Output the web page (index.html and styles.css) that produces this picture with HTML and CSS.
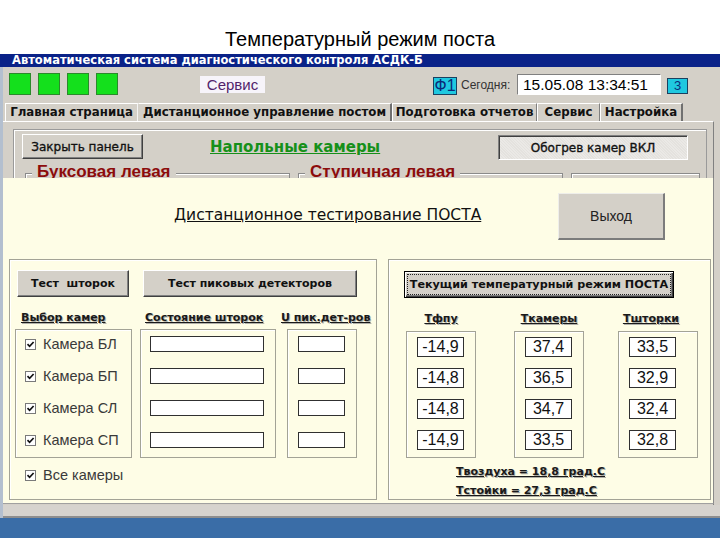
FILE: index.html
```html
<!DOCTYPE html>
<html lang="ru">
<head>
<meta charset="utf-8">
<title>Температурный режим поста</title>
<link rel="stylesheet" href="styles.css">
</head>
<body>
<div class="slide-title">Температурный режим поста</div>
<div class="titlebar">Автоматическая система диагностического контроля АСДК-Б</div>
<div class="window">
  <div class="toolbar">
    <div class="lamps"><span class="lamp"></span><span class="lamp"></span><span class="lamp"></span><span class="lamp"></span></div>
    <div class="service-label">Сервис</div>
    <div class="f1">Ф1</div>
    <div class="today">Сегодня:</div>
    <div class="datebox">15.05.08 13:34:51</div>
    <div class="z-btn">З</div>
  </div>
  <div class="tabs">
    <div class="tab t1">Главная страница</div>
    <div class="tab t2">Дистанционное управление постом</div>
    <div class="tab t3">Подготовка отчетов</div>
    <div class="tab t4">Сервис</div>
    <div class="tab t5">Настройка</div>
  </div>
  <div class="tabpanel">
    <div class="frame">
      <div class="frame-top">
        <div class="btn close-btn">Закрыть панель</div>
        <div class="floor-title">Напольные камеры</div>
        <div class="heat-btn">Обогрев камер ВКЛ</div>
      </div>
      <div class="groups">
        <div class="group g1"><span class="group-title">Буксовая левая</span></div>
        <div class="group g2"><span class="group-title">Ступичная левая</span></div>
        <div class="group g3"></div>
      </div>
    </div>
  </div>
  <div class="bottom-band"></div>

  <div class="dialog">
    <div class="dlg-head">
      <div class="dlg-title">Дистанционное тестирование ПОСТА</div>
      <div class="exit-btn">Выход</div>
    </div>
    <div class="dlg-body">
      <div class="gbox left-box">
        <div class="btn-row">
          <div class="btn test1">Тест&nbsp; шторок</div>
          <div class="btn test2">Тест пиковых детекторов</div>
        </div>
        <div class="heads">
          <span class="hd h-cam">Выбор камер</span>
          <span class="hd h-sh">Состояние шторок</span>
          <span class="hd h-u">U пик.дет-ров</span>
        </div>
        <div class="cols">
          <div class="col cams">
            <div class="cam-row"><svg class="cb" width="11" height="11" viewBox="0 0 11 11"><rect x="0.5" y="0.5" width="10" height="10" fill="#fff" stroke="#7a7a7a"/><path d="M2.5 5.2 L4.6 7.3 L8.6 3" stroke="#111" stroke-width="1.7" fill="none"/></svg><span>Камера БЛ</span></div>
            <div class="cam-row"><svg class="cb" width="11" height="11" viewBox="0 0 11 11"><rect x="0.5" y="0.5" width="10" height="10" fill="#fff" stroke="#7a7a7a"/><path d="M2.5 5.2 L4.6 7.3 L8.6 3" stroke="#111" stroke-width="1.7" fill="none"/></svg><span>Камера БП</span></div>
            <div class="cam-row"><svg class="cb" width="11" height="11" viewBox="0 0 11 11"><rect x="0.5" y="0.5" width="10" height="10" fill="#fff" stroke="#7a7a7a"/><path d="M2.5 5.2 L4.6 7.3 L8.6 3" stroke="#111" stroke-width="1.7" fill="none"/></svg><span>Камера СЛ</span></div>
            <div class="cam-row"><svg class="cb" width="11" height="11" viewBox="0 0 11 11"><rect x="0.5" y="0.5" width="10" height="10" fill="#fff" stroke="#7a7a7a"/><path d="M2.5 5.2 L4.6 7.3 L8.6 3" stroke="#111" stroke-width="1.7" fill="none"/></svg><span>Камера СП</span></div>
          </div>
          <div class="col shut">
            <div class="field wide"></div>
            <div class="field wide"></div>
            <div class="field wide"></div>
            <div class="field wide"></div>
          </div>
          <div class="col upk">
            <div class="field narrow"></div>
            <div class="field narrow"></div>
            <div class="field narrow"></div>
            <div class="field narrow"></div>
          </div>
        </div>
        <div class="cam-row all-cams"><svg class="cb" width="11" height="11" viewBox="0 0 11 11"><rect x="0.5" y="0.5" width="10" height="10" fill="#fff" stroke="#7a7a7a"/><path d="M2.5 5.2 L4.6 7.3 L8.6 3" stroke="#111" stroke-width="1.7" fill="none"/></svg><span>Все камеры</span></div>
      </div>

      <div class="gbox right-box">
        <div class="cur-btn"><span class="focus">Текущий температурный режим ПОСТА</span></div>
        <div class="tcols">
          <div class="tcol c1">
            <div class="hd th">Тфпу</div>
            <div class="tbox">
              <div class="val">-14,9</div>
              <div class="val">-14,8</div>
              <div class="val">-14,8</div>
              <div class="val">-14,9</div>
            </div>
          </div>
          <div class="tcol c2">
            <div class="hd th">Ткамеры</div>
            <div class="tbox">
              <div class="val">37,4</div>
              <div class="val">36,5</div>
              <div class="val">34,7</div>
              <div class="val">33,5</div>
            </div>
          </div>
          <div class="tcol c3">
            <div class="hd th th3">Тшторки</div>
            <div class="tbox">
              <div class="val">33,5</div>
              <div class="val">32,9</div>
              <div class="val">32,4</div>
              <div class="val">32,8</div>
            </div>
          </div>
        </div>
        <div class="hd summ s1">Твоздуха = 18,8 град.С</div>
        <div class="hd summ s2">Тстойки = 27,3 град.С</div>
      </div>
    </div>
  </div>
</div>
<div class="taskbar"></div>
</body>
</html>
```

FILE: styles.css
```css
* { box-sizing: border-box; }
html, body { margin: 0; padding: 0; }
body {
  width: 720px;
  height: 540px;
  overflow: hidden;
  background: #fff;
  font-family: "DejaVu Sans", sans-serif;
}

.slide-title {
  height: 54px;
  display: flex;
  align-items: flex-end;
  justify-content: center;
  padding-bottom: 4px;
  font-family: "Liberation Sans", Arial, sans-serif;
  font-size: 20px;
  line-height: 22px;
  color: #000;
}

.titlebar {
  height: 13px;
  background: #0a2288;
  color: #fff;
  font-weight: bold;
  font-size: 11.5px;
  line-height: 13px;
  padding-left: 12px;
  white-space: nowrap;
}

.window {
  position: relative;
  height: 451px;
  background: #d4d0c8;
  border-left: 3px solid #b3bfcf;
}

/* toolbar */
.toolbar {
  height: 34px;
  display: flex;
  align-items: center;
  padding-left: 6px;
}
.lamps { display: flex; gap: 7px; }
.lamp {
  width: 22px;
  height: 22px;
  background: #14e01c;
  border: 1px solid #2b8a2b;
}
.service-label {
  margin-left: 82px;
  width: 65px;
  height: 17px;
  background: #f7f4fa;
  color: #52236a;
  font-family: "Liberation Sans", Arial, sans-serif;
  font-size: 15px;
  line-height: 17px;
  text-align: center;
}
.f1 {
  margin-left: 168px;
  margin-top: 3px;
  width: 24px;
  height: 18px;
  background: #1fc8e0;
  border: 1px solid #1a4060;
  color: #0a2a78;
  font-family: "Liberation Sans", Arial, sans-serif;
  font-size: 16px;
  line-height: 16px;
  text-align: center;
}
.today {
  margin-left: 4px;
  width: 52px;
  font-family: "Liberation Sans", Arial, sans-serif;
  font-size: 12px;
  color: #333;
  white-space: nowrap;
  margin-top: 2px;
}
.datebox {
  margin-left: 4px;
  width: 144px;
  height: 21px;
  background: #fff;
  border-top: 1px solid #808080;
  border-left: 1px solid #808080;
  border-right: 1px solid #fff;
  border-bottom: 1px solid #fff;
  font-family: "Liberation Sans", Arial, sans-serif;
  font-size: 15.5px;
  line-height: 19px;
  padding-left: 5px;
  color: #000;
  white-space: nowrap;
}
.z-btn {
  margin-left: 6px;
  margin-top: 3px;
  width: 21px;
  height: 16px;
  background: #1fc8e0;
  border: 1px solid #1a4060;
  color: #0a2a78;
  font-family: "Liberation Sans", Arial, sans-serif;
  font-size: 12px;
  line-height: 14px;
  text-align: center;
}

/* tabs */
.tabs {
  height: 20px;
  display: flex;
  align-items: flex-end;
  padding-left: 2px;
}
.tab {
  flex: none;
  height: 18px;
  border-top: 1px solid #fff;
  border-left: 1px solid #fff;
  border-right: 1px solid #808080;
  font-weight: bold;
  font-size: 11.8px;
  line-height: 16px;
  color: #111;
  text-align: center;
  white-space: nowrap;
}
.t1 { width: 133px; border-right-color: #f4f4f4; }
.t2 { width: 254px; border-left-color: transparent; border-right: 2px solid #707070; }
.t3 { width: 145px; }
.t4 { width: 63px; }
.t5 { width: 83px; border-right: 2px solid #707070; }

.tabpanel {
  width: 711px;
  height: 384px;
  border-top: 1px solid #fff;
  border-right: 1px solid #808080;
  overflow: hidden;
}
.frame {
  margin-top: 7px;
  margin-left: 10px;
  width: 694px;
  height: 120px;
  border: 1px solid #9a9a9a;
  box-shadow: inset 1px 1px 0 #fff;
  padding: 4px 18px 0 8px;
}
.frame-top {
  display: flex;
  align-items: flex-start;
}
.btn {
  flex: none;
  background: #d4d0c8;
  border: 1px solid;
  border-color: #fff #404040 #404040 #fff;
  box-shadow: inset -1px -1px 0 #808080;
  font-weight: bold;
  font-size: 11px;
  color: #111;
  display: flex;
  align-items: center;
  justify-content: center;
  white-space: nowrap;
}
.close-btn { width: 121px; height: 25px; font-weight: normal; font-size: 12px; -webkit-text-stroke: 0.35px #111; }
.floor-title {
  margin-left: 67px;
  margin-top: 4px;
  font-weight: bold;
  font-size: 15px;
  line-height: 18px;
  color: #16901a;
  text-decoration: underline;
  white-space: nowrap;
}
.heat-btn {
  flex: none;
  margin-left: auto;
  margin-top: 1px;
  width: 190px;
  height: 25px;
  background-color: #e4e2de;
  background-image: repeating-linear-gradient(45deg, rgba(255,255,255,0.25) 0 1px, transparent 1px 2px);
  border: 1px solid;
  border-color: #808080 #fff #fff #808080;
  box-shadow: inset 1px 1px 0 #404040;
  font-size: 12px;
  font-weight: normal;
  -webkit-text-stroke: 0.35px #111;
  color: #111;
  display: flex;
  align-items: center;
  justify-content: center;
  white-space: nowrap;
}
.groups {
  display: flex;
  margin-top: 13px;
  margin-left: 3px;
}
.group {
  flex: none;
  height: 40px;
  border: 1px solid #8a8a8a;
  box-shadow: inset 1px 1px 0 #fff;
  display: flex;
  align-items: flex-start;
}
.g1 { width: 265px; }
.g2 { width: 265px; margin-left: 8px; }
.g3 { width: 129px; margin-left: 8px; }
.group-title {
  margin-top: -12px;
  margin-left: 6px;
  padding: 0 5px;
  background: #d4d0c8;
  font-family: "Liberation Sans", Arial, sans-serif;
  font-weight: bold;
  font-size: 17px;
  line-height: 20px;
  color: #8c0c0c;
  white-space: nowrap;
}

.bottom-band {
  height: 13px;
  background: #d6d3ce;
  border-bottom: 2px solid #8e8e8e;
}

/* dialog */
.dialog {
  position: absolute;
  top: 111px;
  left: 0;
  width: 711px;
  height: 326px;
  background: #fefde6;
  border-right: 1px solid #8a8a8a;
  border-bottom: 1px solid #a0a0a0;
}
.dlg-head {
  height: 81px;
  display: flex;
  align-items: flex-start;
}
.dlg-title {
  margin-left: 171px;
  margin-top: 27px;
  font-family: "DejaVu Sans", sans-serif;
  font-size: 15.5px;
  line-height: 20px;
  color: #111;
  text-decoration: underline;
  white-space: nowrap;
}
.exit-btn {
  margin-left: auto;
  margin-right: 48px;
  margin-top: 15px;
  width: 107px;
  height: 47px;
  background: #d4d0c8;
  border-top: 1px solid #eeeeea;
  border-left: 1px solid #eeeeea;
  border-right: 2px solid #7c7c7c;
  border-bottom: 2px solid #7c7c7c;
  font-family: "Liberation Sans", Arial, sans-serif;
  font-size: 14px;
  color: #222;
  display: flex;
  align-items: center;
  justify-content: center;
}
.dlg-body {
  display: flex;
  padding-left: 6px;
  gap: 11px;
}
.gbox {
  flex: none;
  height: 241px;
  border: 1px solid #a3a396;
  box-shadow: inset 1px 1px 0 #fff;
}
.left-box { width: 368px; }
.right-box { width: 323px; }

.btn-row {
  display: flex;
  margin-top: 10px;
  padding-left: 7px;
}
.test1 { width: 112px; height: 27px; }
.test2 { width: 214px; height: 27px; margin-left: 14px; }

.hd {
  font-weight: bold;
  font-size: 11px;
  line-height: 14px;
  color: #1a1a1a;
  text-decoration: underline;
  text-shadow: 1px 1px 0 #b0b0a8;
  white-space: nowrap;
}
.heads {
  display: flex;
  margin-top: 14px;
  padding-left: 11px;
}
.h-cam { width: 124px; }
.h-sh { width: 136px; }

.cols {
  display: flex;
  margin-top: 4px;
  padding-left: 5px;
}
.col {
  flex: none;
  height: 129px;
  border: 1px solid #a3a396;
  box-shadow: inset 1px 1px 0 #fff;
  display: flex;
  flex-direction: column;
  gap: 16px;
  padding-top: 6px;
}
.cams { width: 117px; padding-left: 9px; }
.shut { width: 136px; margin-left: 8px; padding-left: 9px; }
.upk { width: 70px; margin-left: 11px; padding-left: 10px; }

.cam-row {
  height: 16px;
  display: flex;
  align-items: center;
  font-family: "Liberation Sans", Arial, sans-serif;
  font-size: 14.5px;
  color: #3a3a3a;
  white-space: nowrap;
}
.cb { flex: none; margin-right: 7px; }
.all-cams { margin-top: 9px; padding-left: 15px; }

.field {
  height: 16px;
  background: #fff;
  border: 1px solid #303030;
}
.wide { width: 114px; }
.narrow { width: 47px; }

.cur-btn {
  margin-top: 11px;
  margin-left: 15px;
  width: 270px;
  height: 27px;
  background: #d4d0c8;
  border: 1px solid #000;
  box-shadow: inset 1px 1px 0 #fff, inset -1px -1px 0 #404040, inset -2px -2px 0 #808080;
  padding: 3px;
  display: flex;
}
.focus {
  flex: 1;
  outline: 1px dotted #222;
  display: flex;
  align-items: center;
  justify-content: center;
  font-weight: bold;
  font-size: 11.2px;
  color: #111;
  white-space: nowrap;
}
.tcols {
  display: flex;
  margin-top: 14px;
  padding-left: 17px;
}
.tcol { flex: none; display: flex; flex-direction: column; }
.c1 { width: 70px; }
.c2 { width: 70px; margin-left: 38px; }
.c3 { width: 80px; margin-left: 34px; }
.th { text-align: center; }
.th3 { padding-right: 14px; }
.tbox {
  margin-top: 5px;
  height: 127px;
  border: 1px solid #a3a396;
  box-shadow: inset 1px 1px 0 #fff;
  display: flex;
  flex-direction: column;
  gap: 11px;
  padding-top: 5px;
  padding-left: 10px;
}
.val {
  width: 47px;
  height: 20px;
  background: #fff;
  border: 1px solid #303030;
  font-family: "Liberation Sans", Arial, sans-serif;
  font-size: 16px;
  line-height: 18px;
  color: #111;
  text-align: center;
}
.summ { padding-left: 67px; }
.s1 { margin-top: 7px; }
.s2 { margin-top: 5px; }

.taskbar {
  height: 20px;
  background: #3a6da7;
}
```
